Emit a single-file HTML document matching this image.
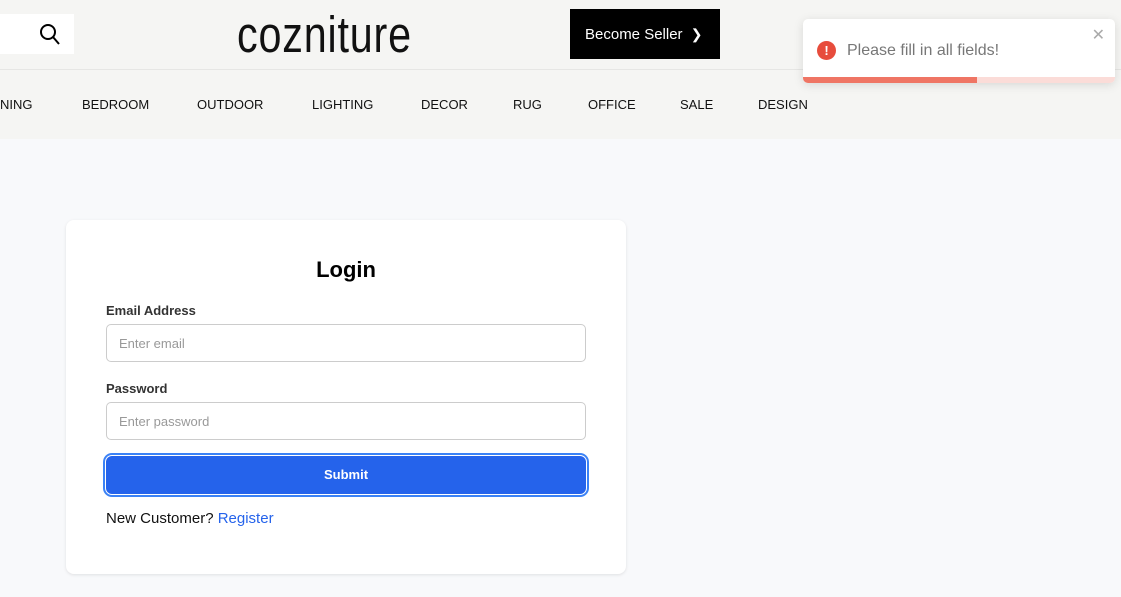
<!DOCTYPE html>
<html><head><meta charset="utf-8"><style>
*{box-sizing:border-box;margin:0;padding:0}
body{width:1121px;height:597px;overflow:hidden;background:#f8f9fb;font-family:"Liberation Sans",sans-serif;position:relative}
.hdr{position:absolute;left:0;top:0;width:1121px;height:139px;background:#f5f5f3}
.line{position:absolute;left:0;top:69px;width:1121px;height:1px;background:#e6e6e4}
.search{position:absolute;left:0;top:14px;width:74px;height:40px;background:#fff}
.logo{position:absolute;left:237px;top:5px;font-size:51px;color:#111;transform:scaleX(.81);transform-origin:left top;letter-spacing:1px}
.seller{position:absolute;left:570px;top:9px;width:150px;height:50px;background:#000;color:#fff;font-size:15px;line-height:50px;padding-left:15px}
.nav{position:absolute;top:97px;font-size:13px;color:#111}
.toast{position:absolute;left:803px;top:19px;width:312px;height:64px;background:#fff;border-radius:5px;box-shadow:0 2px 10px rgba(0,0,0,.12);overflow:hidden}
.card{position:absolute;left:66px;top:220px;width:560px;height:354px;background:#fff;border-radius:8px;box-shadow:0 1px 3px rgba(0,0,0,.1)}
.lbl{position:absolute;left:40px;font-size:13px;font-weight:bold;color:#333}
.inp{position:absolute;left:40px;width:480px;height:38px;border:1px solid #ccc;border-radius:5px;font-size:13px;color:#999;padding:12px 12px;line-height:14px}
</style></head><body>
<div class="hdr"></div><div class="line"></div>
<div class="search"><svg width="74" height="40"><circle cx="48" cy="18" r="7" fill="none" stroke="#000" stroke-width="2"/><line x1="53" y1="23" x2="59" y2="30" stroke="#000" stroke-width="2"/></svg></div>
<div class="logo">cozniture</div>
<div class="seller">Become Seller <span style="font-size:14px;margin-left:4px">&#x276F;</span></div>
<div class="nav" style="left:0">NING</div>
<div class="nav" style="left:82px">BEDROOM</div>
<div class="nav" style="left:197px">OUTDOOR</div>
<div class="nav" style="left:312px">LIGHTING</div>
<div class="nav" style="left:421px">DECOR</div>
<div class="nav" style="left:513px">RUG</div>
<div class="nav" style="left:588px">OFFICE</div>
<div class="nav" style="left:680px">SALE</div>
<div class="nav" style="left:758px">DESIGN</div>
<div class="toast">
<div style="position:absolute;left:14px;top:22px;width:19px;height:19px;border-radius:50%;background:#e74c3c;color:#fff;font-weight:bold;font-size:13px;text-align:center;line-height:19px">!</div>
<div style="position:absolute;left:44px;top:23px;font-size:16px;color:#777">Please fill in all fields!</div>
<div style="position:absolute;right:10px;top:6px;font-size:16px;color:#aaa">✕</div>
<div style="position:absolute;left:0;bottom:0;width:312px;height:6px;background:#fbdcd8"></div>
<div style="position:absolute;left:0;bottom:0;width:174px;height:6px;background:#ef7564"></div>
</div>
<div class="card">
<div style="position:absolute;left:0;width:560px;top:37px;text-align:center;font-size:22px;font-weight:bold">Login</div>
<div class="lbl" style="top:83px">Email Address</div>
<div class="inp" style="top:104px">Enter email</div>
<div class="lbl" style="top:161px">Password</div>
<div class="inp" style="top:182px">Enter password</div>
<div style="position:absolute;left:40px;top:236px;width:480px;height:38px;background:#2563eb;border-radius:6px;box-shadow:0 0 0 1px #fff,0 0 0 3px #3b82f6;color:#fff;font-weight:bold;font-size:13px;text-align:center;line-height:38px">Submit</div>
<div style="position:absolute;left:40px;top:290px;font-size:15px;color:#111">New Customer? <span style="color:#2563eb">Register</span></div>
</div>
</body></html>
